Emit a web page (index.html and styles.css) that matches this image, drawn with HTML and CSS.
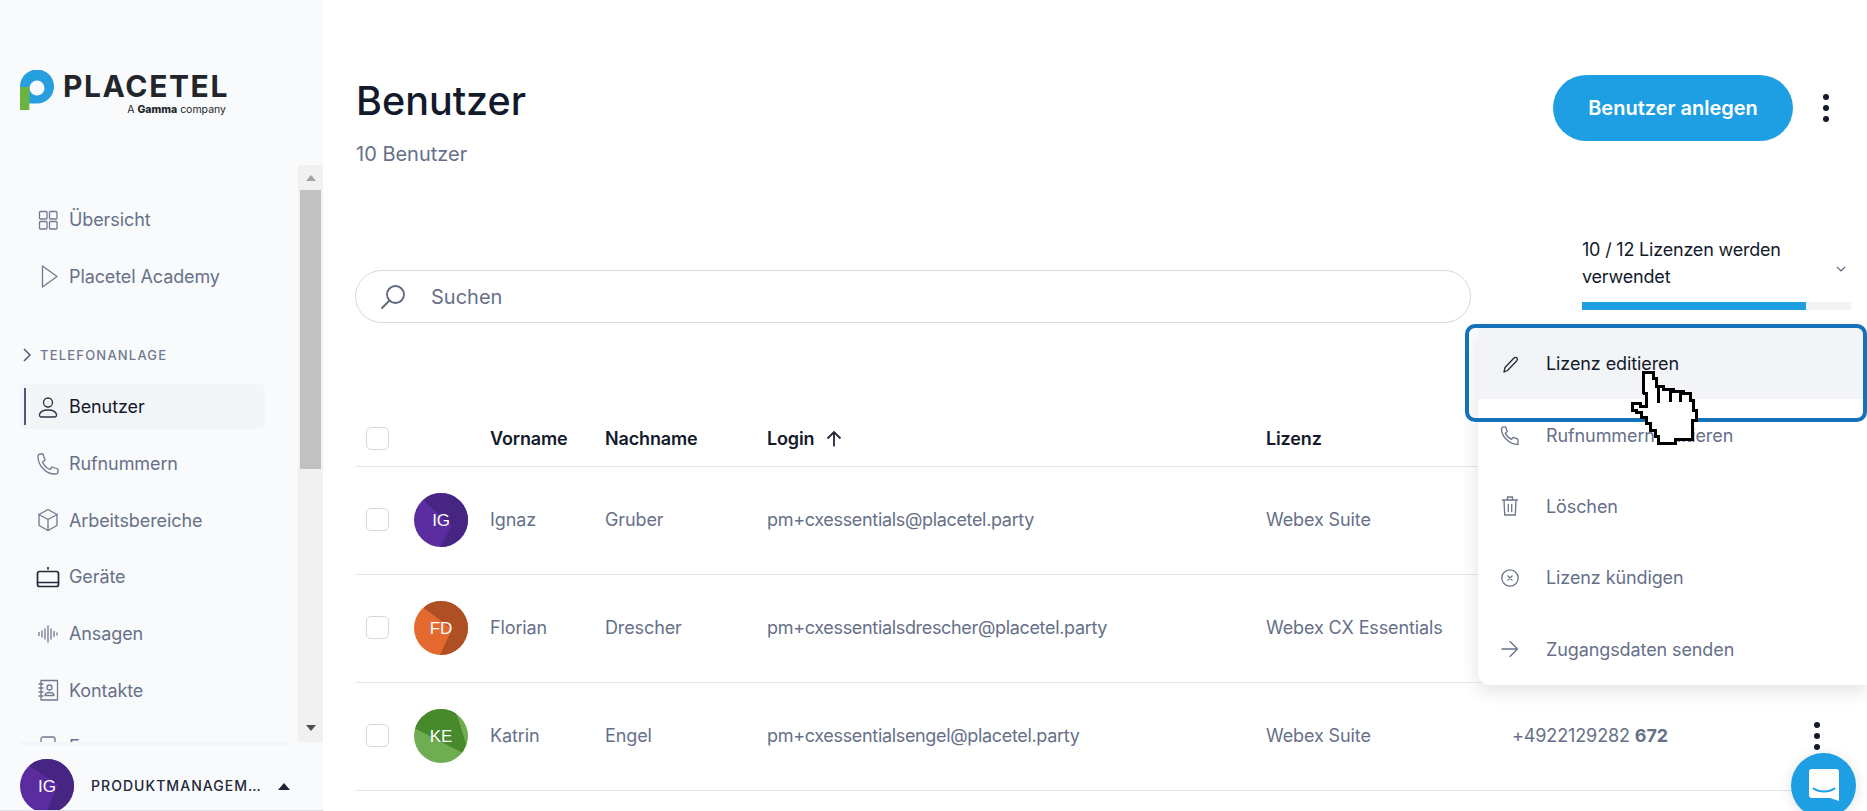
FILE: index.html
```html
<!DOCTYPE html>
<html lang="de">
<head>
<meta charset="utf-8">
<title>Benutzer</title>
<link rel="stylesheet" href="styles.css">
</head>
<body>
<div class="app">
  <aside class="sidebar">
    <div class="brand">
      <svg class="brand-mark" viewBox="0 0 34 40" width="34" height="40"><path d="M0 17a17 17 0 1 1 17 16.500H9V17H0z" fill="#259fdd"/><circle cx="17" cy="18" r="7.500" fill="#f9fafc"/><rect x="0" y="17" width="9.300" height="23" fill="#6db33f"/></svg>
      <div class="brand-text">
        <div class="brand-name">PLACETEL</div>
        <div class="brand-sub">A <b>Gamma</b> company</div>
      </div>
    </div>
    <div class="side-scroll">
      <nav class="nav">
        <a class="nav-item"><svg class="ico" viewBox="0 0 24 24"><rect x="3.500" y="3.500" width="7.500" height="7.500" rx="1"/><rect x="13.500" y="3.500" width="7.500" height="7.500" rx="1"/><rect x="3.500" y="13.500" width="7.500" height="7.500" rx="1"/><rect x="13.500" y="13.500" width="7.500" height="7.500" rx="1"/></svg>Übersicht</a>
        <a class="nav-item"><svg class="ico" viewBox="0 0 24 24"><path d="M6.500 2l14.500 10.500-14.500 10.500z"/></svg>Placetel Academy</a>
        <div class="nav-section"><svg class="sec-chev" viewBox="0 0 8 14" width="8" height="14"><path d="M1 1l6 6-6 6"/></svg>TELEFONANLAGE</div>
        <a class="nav-item active"><svg class="ico" viewBox="0 0 24 24"><circle cx="12" cy="7.500" r="4.500"/><path d="M5.500 22h13a2 2 0 0 0 2-2.500c-.8-3-4.300-4.500-8.500-4.500s-7.700 1.500-8.500 4.500a2 2 0 0 0 2 2.500z"/></svg>Benutzer</a>
        <a class="nav-item"><svg class="ico" viewBox="0 0 24 24"><path d="M2 4.500C2 3 3 2 4.500 2H7l2 6-2.500 2c1.500 3.500 4 6 7.500 7.500l2-2.500 6 2v2.500c0 1.500-1 2.500-2.500 2.500C10.500 22.500 2 14 2 4.500z"/></svg>Rufnummern</a>
        <a class="nav-item"><svg class="ico" viewBox="0 0 24 24"><path d="M12 1.500l9 5v11l-9 5-9-5v-11z"/><path d="M3 6.500l9 5 9-5M12 11.500v11"/></svg>Arbeitsbereiche</a>
        <a class="nav-item"><svg class="ico ico-dark" viewBox="0 0 24 24"><rect x="1.500" y="6.500" width="21" height="15" rx="2"/><path d="M1.500 17.500h21M12 2.500v1.500"/></svg>Geräte</a>
        <a class="nav-item"><svg class="ico" viewBox="0 0 24 24"><path d="M3 10.500v3M6 9v6M9 7v10M12 4v16M15 7v10M18 9.500v5M21 11v2"/></svg>Ansagen</a>
        <a class="nav-item"><svg class="ico" viewBox="0 0 24 24"><rect x="5" y="2.500" width="16.500" height="19.500"/><circle cx="13.500" cy="9.500" r="2.500"/><path d="M9 17.500c0-2 2-3 4.500-3s4.500 1 4.500 3zM3 6h4M3 10h4M3 14h4M3 18h4"/></svg>Kontakte</a>
        <a class="nav-item"><svg class="ico" viewBox="0 0 24 24"><rect x="5" y="2" width="14" height="20" rx="2"/></svg>Faxe</a>
      </nav>
      <div class="fake-scrollbar">
        <span class="arrow-up"></span>
        <div class="fake-track"><div class="fake-thumb"></div></div>
        <span class="arrow-down"></span>
      </div>
    </div>
    <div class="account">
      <svg class="avatar" viewBox="0 0 54 54"><rect width="54" height="54" fill="#5a2ca0"/><path d="M9 7L38 25 26 54H54V0H9z" fill="#472582"/><text class="avatar-text" x="27" y="33">IG</text></svg>
      <span class="account-name">PRODUKTMANAGEMENT</span>
      <span class="account-caret"></span>
    </div>
  </aside>

  <main class="main">
    <header class="page-head">
      <div class="titles">
        <h1>Benutzer</h1>
        <p class="sub">10 Benutzer</p>
      </div>
      <div class="head-actions">
        <button class="primary">Benutzer anlegen</button>
        <span class="kebab big"><i></i><i></i><i></i></span>
      </div>
    </header>

    <section class="toolbar">
      <label class="search">
        <svg class="search-ico" viewBox="0 0 26 26" width="26" height="26"><circle cx="15.500" cy="10.500" r="8.500"/><path d="M9.500 16.500L2 24"/></svg>
        <span>Suchen</span>
      </label>
      <div class="licenses">
        <div class="lic-top">
          <span class="lic-text">10 / 12 Lizenzen werden verwendet</span>
          <svg class="lic-chev" viewBox="0 0 10 6" width="10" height="6"><path d="M1 1l4 4 4-4"/></svg>
        </div>
        <div class="lic-bar"><div class="lic-fill" style="width:83.300%"></div></div>
      </div>
    </section>

    <table class="users">
      <colgroup><col class="c-check"><col class="c-av"><col class="c-first"><col class="c-last"><col class="c-login"><col class="c-lic"><col class="c-phone"><col class="c-act"></colgroup>
      <thead>
        <tr>
          <th><span class="check"></span></th><th></th><th>Vorname</th><th>Nachname</th>
          <th><span class="sort">Login<svg viewBox="0 0 18 18" width="18" height="18"><path d="M9 16.500V2M2.500 8.500L9 2l6.500 6.500"/></svg></span></th>
          <th>Lizenz</th><th></th><th></th>
        </tr>
      </thead>
      <tbody>
        <tr>
          <td><span class="check"></span></td>
          <td><svg class="avatar" viewBox="0 0 54 54"><rect width="54" height="54" fill="#5a2ca0"/><path d="M9 7L38 33 26 54H54V0H9z" fill="#472582"/><text class="avatar-text" x="27" y="33">IG</text></svg></td>
          <td>Ignaz</td><td>Gruber</td><td class="login">pm+cxessentials@placetel.party</td><td>Webex Suite</td><td>+4922129282 <b>670</b></td><td></td>
        </tr>
        <tr>
          <td><span class="check"></span></td>
          <td><svg class="avatar" viewBox="0 0 54 54"><rect width="54" height="54" fill="#e4692f"/><path d="M10 7L38 28 26 54H54V0H10z" fill="#ae4f24"/><text class="avatar-text" x="27" y="33">FD</text></svg></td>
          <td>Florian</td><td>Drescher</td><td class="login">pm+cxessentialsdrescher@placetel.party</td><td>Webex CX Essentials</td><td>+4922129282 <b>671</b></td><td></td>
        </tr>
        <tr>
          <td><span class="check"></span></td>
          <td><svg class="avatar" viewBox="0 0 54 54"><rect width="54" height="54" fill="#6fac52"/><path d="M0 19L49 44 52 35 44 9 40 0H0z" fill="#468a2c"/><text class="avatar-text" x="27" y="33">KE</text></svg></td>
          <td>Katrin</td><td>Engel</td><td class="login">pm+cxessentialsengel@placetel.party</td><td>Webex Suite</td><td>+4922129282 <b>672</b></td><td class="act"><span class="kebab small"><i></i><i></i><i></i></span></td>
        </tr>
      </tbody>
    </table>
  </main>
</div>

<div class="menu">
  <a class="menu-item hover"><svg class="m-ico" viewBox="0 0 24 24"><path d="M6 20l1-4.500 9-9.500c.8-.8 2-.8 2.800 0s.8 2 0 2.800l-9.300 9.700z"/></svg>Lizenz editieren</a>
  <a class="menu-item"><svg class="m-ico" viewBox="0 0 24 24"><path d="M3.500 6c0-1.200.9-2.200 2.200-2.200H7.500l1.800 4.700-2 1.800c1.200 2.700 3.300 4.800 6.200 6l1.800-2 4.700 1.800V21.500C12 21.500 3.500 14 3.500 6z"/></svg>Rufnummern editieren</a>
  <a class="menu-item"><svg class="m-ico" viewBox="0 0 24 24"><path d="M4.500 6h15M6 6l.7 15h10.600L18 6M9.500 6V3h5v3M10.300 10.500v7M13.700 10.500v7"/></svg>Löschen</a>
  <a class="menu-item"><svg class="m-ico" viewBox="0 0 24 24"><circle cx="12" cy="12" r="8.200"/><path d="M10 10l4 4M14 10l-4 4"/></svg>Lizenz kündigen</a>
  <a class="menu-item"><svg class="m-ico" viewBox="0 0 24 24"><path d="M4 12h15.500M12 4.500l7.500 7.500-7.500 7.500"/></svg>Zugangsdaten senden</a>
</div>

<div class="focus-ring"></div>

<svg class="hand" viewBox="0 0 270 285" width="90" height="95"><path d="M70 36H100V56H108V78H130V88H160V94H190V100H212V120H220V150H228V180H218V238H165V250H115V230H106V212H92V190H78V172H64V158H50V150H38V130H60V138H78V100H72Z"/><path d="M116 78V130M150 90V125M182 96V125"/></svg>

<div class="chat">
  <svg viewBox="0 0 30 32" width="30" height="32"><path d="M3 0H27a3 3 0 0 1 3 3V32L21 29H3a3 3 0 0 1-3-3V3a3 3 0 0 1 3-3z" fill="#fff"/><path d="M4.500 19.500c6 4 15 4 21 0" fill="none" stroke="#1e9fe3" stroke-width="2" stroke-linecap="round"/></svg>
</div>
</body>
</html>
```
FILE: styles.css
```css
* { box-sizing: border-box; }
html, body { margin: 0; height: 100%; overflow: hidden; background: #fff; }
body { font-family: "Inter", "Noto Sans", sans-serif; font-size: 18px; color: #667089; }
.app { display: flex; height: 811px; overflow: hidden; }

/* sidebar */
.sidebar { width: 323px; flex: none; background: #f9fafc; display: flex; flex-direction: column; border-bottom: 1px solid #dfe1e6; overflow: hidden; height: 811px; }
.brand { height: 165px; flex: none; padding: 70px 0 0 20px; display: flex; gap: 9px; align-items: flex-start; }
.brand-mark { flex: none; }
.brand-text { width: 163px; }
.brand-name { font-weight: 700; font-size: 30px; line-height: 26px; margin-top: 3px; letter-spacing: 1.600px; color: #22252b; white-space: nowrap; }
.brand-sub { font-size: 10.500px; line-height: 14px; margin-top: 4px; text-align: right; color: #22252b; }
.brand-sub b { font-weight: 800; }

.side-scroll { height: 577px; flex: none; display: flex; overflow: hidden; }
.nav { width: 298px; padding: 32px 0 0 20px; display: flex; flex-direction: column; gap: 11.670px; overflow: hidden; }
.nav-item { position: relative; flex: none; width: 245px; height: 45px; padding-left: 16px; display: flex; align-items: center; gap: 9px; border-radius: 6px; color: #677189; letter-spacing: -.1px; }
.nav-item.active { background: #f3f5f9; color: #131a2b; }
.nav-item.active::before { content: ""; position: absolute; left: 4px; top: 4px; bottom: 4px; width: 2px; background: #4d5a78; }
.ico { width: 24px; height: 24px; flex: none; fill: none; stroke: #6f7990; stroke-width: 1.300; stroke-linecap: round; stroke-linejoin: round; }
.active .ico { stroke: #2b3245; }
.ico-dark { stroke: #23283a; stroke-width: 1.700; }
.nav-section { flex: none; height: 22px; margin: 34px 0 6.500px 3px; display: flex; align-items: center; gap: 9px; font-size: 13px; font-weight: 500; letter-spacing: 1.200px; color: #6f7990; }
.sec-chev { fill: none; stroke: #4f586e; stroke-width: 1.500; }

.fake-scrollbar { width: 25px; flex: none; background: #f1f1f1; display: flex; flex-direction: column; align-items: center; }
.arrow-up, .arrow-down { flex: none; width: 0; height: 0; border-left: 5.500px solid transparent; border-right: 5.500px solid transparent; }
.arrow-up { border-bottom: 6px solid #a3a3a3; margin: 10px 0 9px; }
.arrow-down { border-top: 6px solid #505050; margin: 0 0 11px; }
.fake-track { flex: 1; width: 21px; }
.fake-thumb { height: 279px; background: #c1c1c1; }

.account { flex: 1; margin-left: 20px; width: 270px; border-top: 3px solid #f4f5f8; display: flex; align-items: flex-start; padding-top: 14px; gap: 17px; }
.account .avatar { flex: none; }
.account-name { width: 177px; margin-top: 17px; font-size: 14px; line-height: 20px; font-weight: 500; letter-spacing: 1.050px; color: #23283a; white-space: nowrap; overflow: hidden; text-overflow: ellipsis; }
.account-caret { flex: none; width: 0; height: 0; margin: 24px 0 0 -7px; border-left: 6px solid transparent; border-right: 6px solid transparent; border-bottom: 7px solid #1c2335; }

.avatar { width: 54px; height: 54px; border-radius: 50%; display: block; }
.avatar-text { fill: #fff; font-family: "Liberation Sans", sans-serif; font-size: 17px; text-anchor: middle; }

/* main */
.main { flex: 1; min-width: 0; padding: 75px 16px 0 32px; }
.page-head { display: flex; justify-content: space-between; align-items: flex-start; height: 90px; padding-left: 1px; padding-right: 22px; }
h1 { margin: 0; font-size: 39.500px; line-height: 52px; font-weight: 500; color: #131a2b; }
.sub { margin: 15px 0 0; font-size: 20px; line-height: 24px; color: #667089; }
.head-actions { display: flex; align-items: center; gap: 30px; }
.primary { width: 240px; height: 66px; border: 0; border-radius: 33px; background: #1e9fe3; color: #fff; font: 600 20px "Inter", sans-serif; padding: 0; }
.kebab { display: flex; flex-direction: column; gap: 5px; width: 6px; }
.kebab i { display: block; width: 6px; height: 6px; border-radius: 50%; background: #131a2b; }

.toolbar { display: flex; align-items: flex-start; margin-top: 71px; height: 74px; }
.search { width: 1116px; height: 53px; margin-top: 34px; border: 1px solid #d5d8e2; border-radius: 27px; display: flex; align-items: center; padding-left: 24px; gap: 25px; color: #667089; font-size: 20px; }
.search-ico { fill: none; stroke: #5c667f; stroke-width: 1.800; stroke-linecap: round; flex: none; }
.licenses { width: 269px; margin-left: auto; }
.lic-top { display: flex; align-items: center; height: 66px; justify-content: space-between; padding-right: 5px; }
.lic-text { align-self: flex-start; width: 215px; line-height: 27px; color: #131a2b; letter-spacing: -.2px; }
.lic-chev { fill: none; stroke: #5c667f; stroke-width: 1.200; }
.lic-bar { height: 8px; background: #f2f2f2; }
.lic-fill { height: 8px; background: #1e9fe3; }

.users { width: 1496px; margin-top: 100px; border-collapse: collapse; table-layout: fixed; }
.c-check { width: 59px; } .c-av { width: 76px; } .c-first { width: 115px; } .c-last { width: 162px; }
.c-login { width: 499px; } .c-lic { width: 246px; } .c-phone { width: 280px; } .c-act { width: 59px; }
.users th, .users td { padding: 0; text-align: left; border-bottom: 1px solid #e4e6ef; font-size: 18px; }
.users th { height: 56px; padding-top: 2px; font-weight: 600; color: #131a2b; letter-spacing: -.15px; }
.users td { height: 108px; padding-bottom: 1px; color: #667089; letter-spacing: -.12px; }
.users td.login { letter-spacing: -.33px; }
.users th:first-child, .users td:first-child { padding-left: 11px; }
.users td b { font-weight: 700; }
.check { display: block; width: 23px; height: 23px; border: 1.500px solid #d5d8e2; border-radius: 5px; background: #fff; }
.sort { display: inline-flex; align-items: center; gap: 11px; }
.sort svg { fill: none; stroke: #23283a; stroke-width: 1.800; }
.act .small { margin-left: 22px; }

/* overlays */
.menu { position: absolute; left: 1478px; top: 328px; width: 389px; height: 357px; background: #fff; border-radius: 0 0 0 12px; box-shadow: 0 6px 18px rgba(40, 50, 80, .14); display: flex; flex-direction: column; }
.menu-item { height: 71.400px; flex: none; display: flex; align-items: center; padding-left: 20px; gap: 24px; color: #667089; letter-spacing: -.1px; }
.menu-item.hover { background: #f2f4f8; color: #131a2b; }
.m-ico { width: 24px; height: 24px; flex: none; fill: none; stroke: #6a748c; stroke-width: 1.300; stroke-linecap: round; stroke-linejoin: round; }
.hover .m-ico { stroke: #23283a; }
.focus-ring { position: absolute; left: 1465px; top: 324px; width: 402px; height: 98px; border: 4px solid #1572b9; border-radius: 10px; }
.hand { position: absolute; left: 1620px; top: 360px; shape-rendering: crispEdges; fill: #fff; stroke: #000; stroke-width: 9; }
.chat { position: absolute; left: 1791px; top: 753px; width: 65px; height: 65px; border-radius: 50%; background: #1e9fe3; box-shadow: 0 2px 14px rgba(0, 0, 0, .12); display: flex; justify-content: center; padding-top: 16px; }
```
